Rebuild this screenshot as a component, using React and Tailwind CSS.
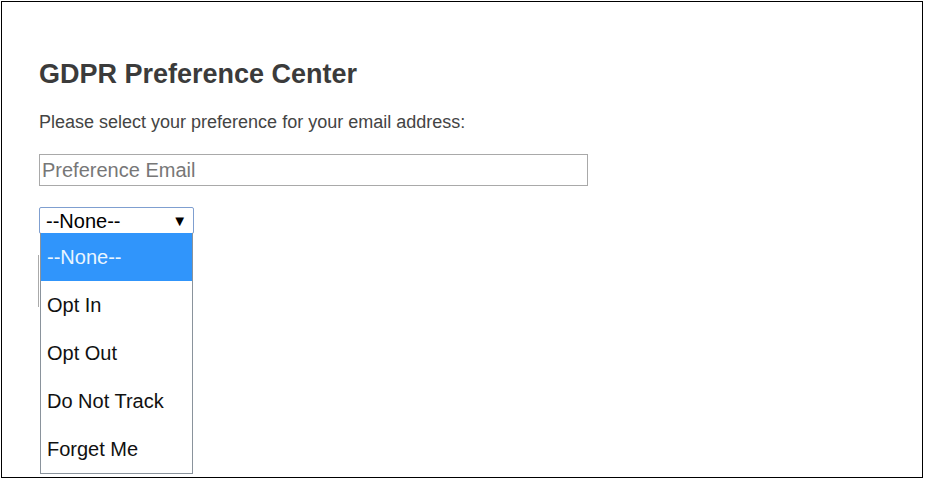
import React from "react";

export default function App() {
  const options = ["Opt In", "Opt Out", "Do Not Track", "Forget Me"];
  return (
    <div className="w-[925px] h-[482px] bg-white" style={{ fontFamily: '"Liberation Sans", Arial, sans-serif' }}>
      <div className="ml-px mt-px w-[922px] h-[477px] border border-black pl-[37px] pt-[57px] relative">
        <h1 className="text-[27px] font-bold text-[#3b3b3b] leading-[30px]">GDPR Preference Center</h1>
        <p className="mt-[23px] text-[18px] text-[#444] leading-[20px]">Please select your preference for your email address:</p>
        <div className="mt-[22px] w-[549px] h-[32px] border border-[#a9a9a9] flex items-center pl-[2px] text-[20px] text-[#777]">
          Preference Email
        </div>
        <div className="mt-[21px] relative w-[155px]">
          <div className="h-[27px] border border-[#7f9fd0] rounded-[2px] flex items-center justify-between pl-[6px] pr-[6px] text-[20px] text-black leading-none">
            <span>--None--</span>
            <span className="text-[15px]">▼</span>
          </div>
          <div className="absolute left-px top-[26px] w-[153px] border border-[#8a939c] border-t-0 bg-white z-10">
            <div className="h-[48px] bg-[#3095fb] text-[#eaf5ff] text-[20px] flex items-center pl-[6px]">--None--</div>
            {options.map((o) => (
              <div key={o} className="h-[48px] text-[20px] text-[#111] flex items-center pl-[6px]">{o}</div>
            ))}
          </div>
          <div className="absolute left-[-1px] top-[48px] w-px h-[52px] bg-[#aaa]"></div>
        </div>
      </div>
    </div>
  );
}
